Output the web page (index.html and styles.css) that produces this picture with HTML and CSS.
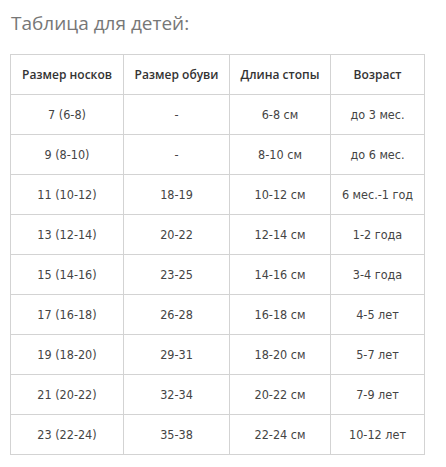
FILE: index.html
```html
<!DOCTYPE html>
<html lang="ru">
<head>
<meta charset="utf-8">
<link rel="stylesheet" href="styles.css">
</head>
<body>
<h2 class="title">Таблица для детей:</h2>
<table class="sizes">
<colgroup><col class="c1"><col class="c2"><col class="c3"><col class="c4"></colgroup>
<thead>
<tr><th>Размер носков</th><th>Размер обуви</th><th>Длина стопы</th><th>Возраст</th></tr>
</thead>
<tbody>
<tr><td>7 (6-8)</td><td>-</td><td>6-8 см</td><td>до 3 мес.</td></tr>
<tr><td>9 (8-10)</td><td>-</td><td>8-10 см</td><td>до 6 мес.</td></tr>
<tr><td>11 (10-12)</td><td>18-19</td><td>10-12 см</td><td>6 мес.-1 год</td></tr>
<tr><td>13 (12-14)</td><td>20-22</td><td>12-14 см</td><td>1-2 года</td></tr>
<tr><td>15 (14-16)</td><td>23-25</td><td>14-16 см</td><td>3-4 года</td></tr>
<tr><td>17 (16-18)</td><td>26-28</td><td>16-18 см</td><td>4-5 лет</td></tr>
<tr><td>19 (18-20)</td><td>29-31</td><td>18-20 см</td><td>5-7 лет</td></tr>
<tr><td>21 (20-22)</td><td>32-34</td><td>20-22 см</td><td>7-9 лет</td></tr>
<tr><td>23 (22-24)</td><td>35-38</td><td>22-24 см</td><td>10-12 лет</td></tr>
</tbody>
</table>
</body>
</html>
```
FILE: styles.css
```css
html, body { margin: 0; padding: 0; background: #fff; }
body { padding: 0 0 0 10px; }
.title {
  margin: 0;
  padding: 9px 0 0 1px;
  height: 45px;
  box-sizing: border-box;
  font-family: "Open Sans", sans-serif;
  font-weight: 400;
  font-size: 19px;
  line-height: 28px;
  color: #777;
}
.sizes {
  border-collapse: collapse;
  table-layout: fixed;
  width: 414px;
  margin-top: 9px;
}
.c1 { width: 113px; }
.c2 { width: 106px; }
.c3 { width: 101px; }
.c4 { width: 94px; }
.sizes th, .sizes td {
  border: 1px solid #d3d3d3;
  height: 40px;
  padding: 0;
  text-align: center;
  vertical-align: middle;
  box-sizing: border-box;
}
.sizes th {
  font-family: "Open Sans", sans-serif;
  font-weight: 600;
  font-size: 12px;
  color: #333;
}
.sizes td {
  font-family: "DejaVu Sans Condensed", "DejaVu Sans", sans-serif;
  font-size: 12.5px;
  color: #444;
}
```
